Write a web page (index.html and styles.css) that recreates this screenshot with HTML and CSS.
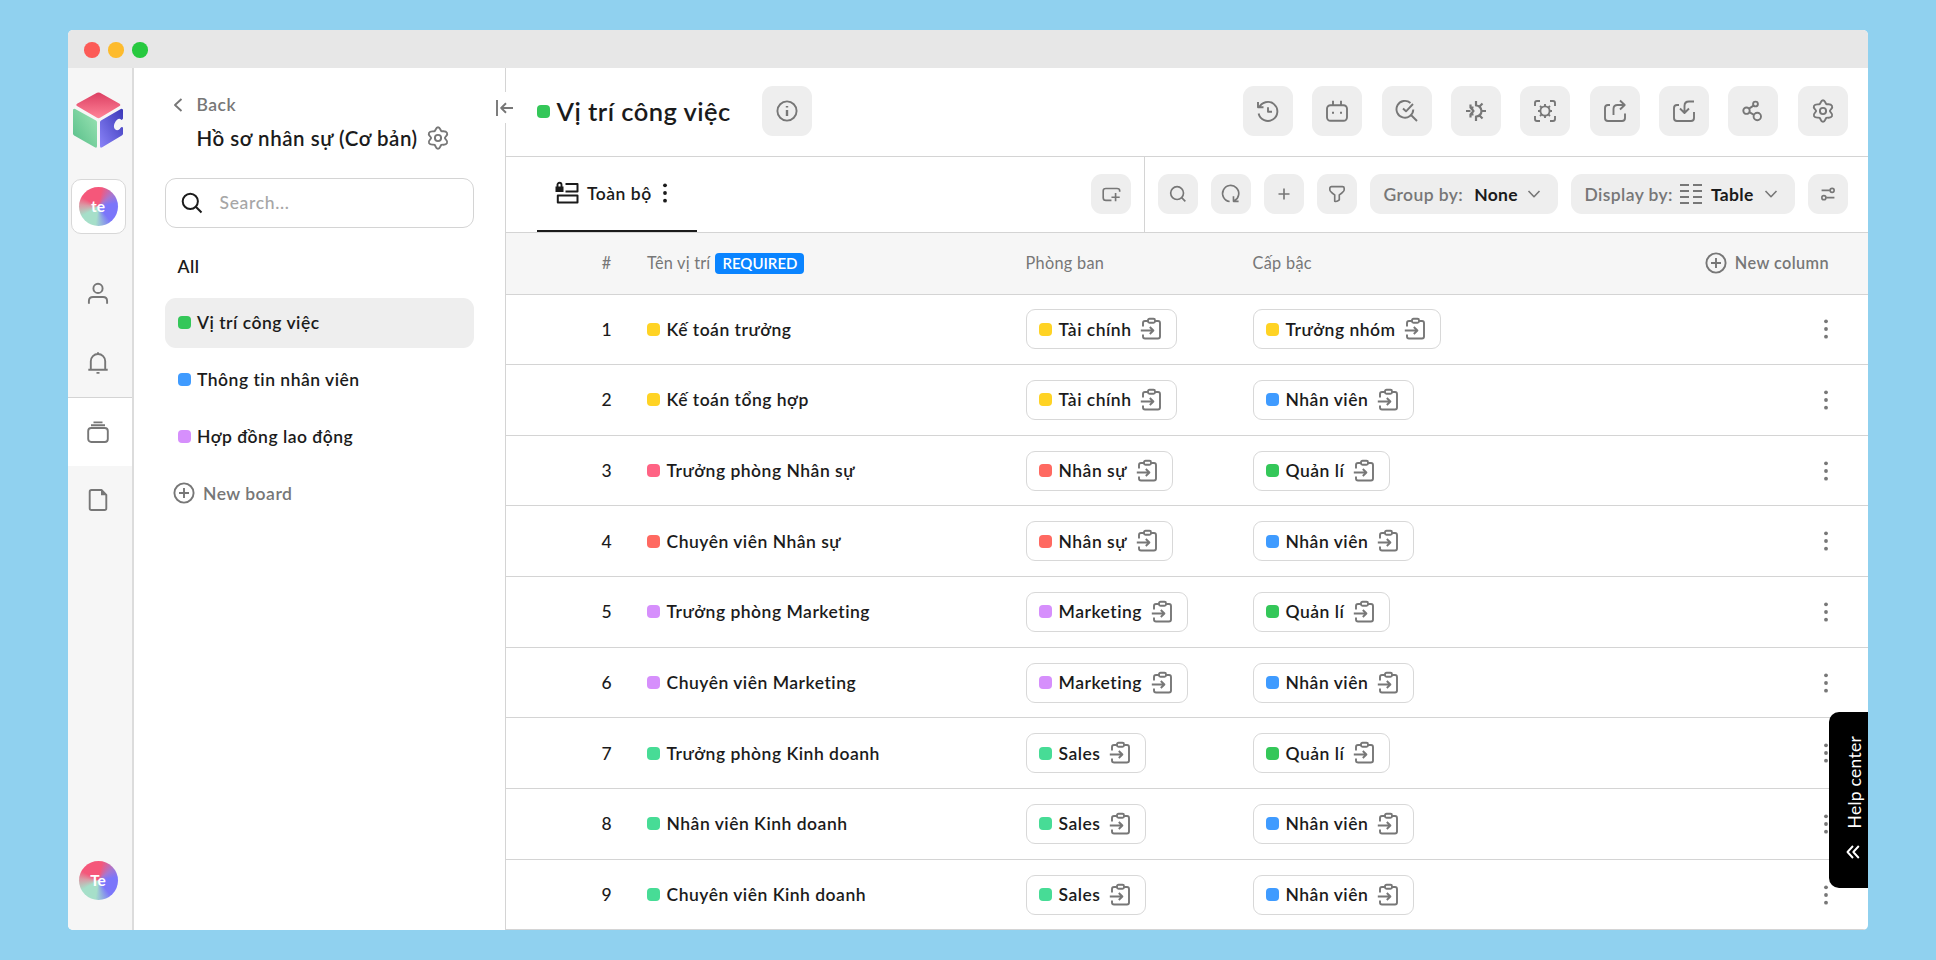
FILE: index.html
```html
<!DOCTYPE html>
<html lang="vi">
<head>
  <meta charset="UTF-8">
  <meta name="viewport" content="width=device-width, initial-scale=1.0">
  <title>Vị trí công việc</title>
  <link rel="stylesheet" href="styles.css">
</head>
<body>

<!-- Icon sprite -->
<svg class="sprite" xmlns="http://www.w3.org/2000/svg">
  <symbol id="i-gear" viewBox="0 0 24 24"><path d="M12 1.2C14.4 1.2 14.1 4.4 15.4 5.1S19.6 4.3 21 6.9 18.9 10.5 18.9 12 22.4 14.4 21 17.1 16.8 18.1 15.4 18.9 14.4 22.8 12 22.8 9.9 19.7 8.6 18.9 4.4 19.7 3 17.1 5.1 13.5 5.1 12 1.6 9.5 3 6.9 7.2 5.9 8.6 5.1 9.6 1.2 12 1.2Z"/><circle cx="12" cy="12" r="3.1"/></symbol>
  <symbol id="i-search" viewBox="0 0 24 24"><circle cx="10.3" cy="10.3" r="7.6"/><path d="M15.8 15.8 21.5 21.5"/></symbol>
  <symbol id="i-plus-circle" viewBox="0 0 24 24"><circle cx="12" cy="12" r="9.6"/><path d="M12 7v10M7 12h10"/></symbol>
  <symbol id="i-chev" viewBox="0 0 14 8"><path d="M1.5 1 7 6.7 12.5 1"/></symbol>
  <symbol id="i-dots" viewBox="0 0 6 22"><circle cx="3" cy="3.3" r="1.9"/><circle cx="3" cy="11" r="1.9"/><circle cx="3" cy="18.7" r="1.9"/></symbol>
  <symbol id="i-link" viewBox="0 0 24 24"><path d="M9 4H6Q4 4 4 6V9.5M16 4h3Q21 4 21 6V19.5Q21 21.5 19 21.5H6Q4 21.5 4 19.5V17.5M1.8 13.5H14M10.8 10 14.4 13.5 10.8 17"/><rect x="9" y="1.8" width="7" height="4" rx="1.5"/></symbol>
</svg>

<div class="window">
  <div class="titlebar">
    <span class="light light-red"></span>
    <span class="light light-yellow"></span>
    <span class="light light-green"></span>
  </div>

  <div class="app">
    <nav class="rail">
      <svg class="logo" viewBox="0 0 50 56">
        <defs>
          <linearGradient id="lg-top" x1="0" y1="0" x2="0" y2="1"><stop offset="0" stop-color="#dc3f62"/><stop offset="1" stop-color="#ff8398"/></linearGradient>
          <linearGradient id="lg-left" x1="0" y1="1" x2="1" y2="0"><stop offset="0" stop-color="#55bd88"/><stop offset="1" stop-color="#9de5b5"/></linearGradient>
          <linearGradient id="lg-right" x1="0" y1="1" x2="1" y2="0"><stop offset="0" stop-color="#8a84f8"/><stop offset="1" stop-color="#3b38b8"/></linearGradient>
        </defs>
        <path fill="url(#lg-top)" d="M24 .8Q25.500 0 27 .8L46.600 11.800Q48.300 13 46.600 14L27 25.800Q25.500 26.600 24 25.800L4 14Q2.300 13 4 11.800Z"/>
        <path fill="url(#lg-left)" d="M0 18.300Q0 16 2.200 17L23 28.500Q24 29.200 24 30.500V54Q24 56.500 21.800 55.300L1.200 43.500Q0 42.800 0 41.500Z"/>
        <path fill="url(#lg-right)" d="M50 18.300Q50 16 47.800 17L28 28.500Q27 29.200 27 30.500V54Q27 56.500 29.200 55.300L48.800 43.500Q50 42.800 50 41.500V35.600C48.500 34.200 47.500 35.800 46.800 37C43 40.200 39.500 36.500 41.500 31.500C43.300 27.500 46.300 25.500 48 27.600Q49 28.500 50 26.500Z"/>
      </svg>
      <div class="workspace"><span class="avatar">te</span></div>
      <div class="rail-item"><svg class="icon" viewBox="0 0 24 24"><circle cx="12" cy="6.4" r="4.6"/><path d="M2.900 21.800V19Q2.900 15 7 15H17Q21.100 15 21.100 19V21.800"/></svg></div>
      <div class="rail-item"><svg class="icon" viewBox="0 0 24 24"><path d="M12 1.300V3M4.800 18.600V10.200A7.200 7.200 0 0 1 19.200 10.200V18.600M2.300 18.800H21.700M10.500 21.900H13.500"/></svg></div>
      <div class="rail-item rail-active"><svg class="icon" viewBox="0 0 24 24"><rect x="2.2" y="8" width="19.6" height="14" rx="3"/><path d="M7.500 2.400H16.500M5 5.200H19"/></svg></div>
      <div class="rail-item"><svg class="icon" viewBox="0 0 24 24"><path d="M15.500 2H5.500Q3.700 2 3.700 3.800V20.200Q3.700 22 5.500 22H18.500Q20.300 22 20.300 20.200V6.800Z"/><path class="solid" d="M15 2V7.300H20.300Z"/></svg></div>
      <span class="avatar avatar-user">Te</span>
    </nav>

    <aside class="sidebar">
      <button class="collapse"><svg viewBox="0 0 18 16"><path d="M1 0V16M17 8H5.500M10 3.300 5.200 8 10 12.700"/></svg></button>
      <a class="back"><svg viewBox="0 0 10 14"><path d="M8.500 1 2 7 8.500 13"/></svg>Back</a>
      <div class="board-title">Hồ sơ nhân sự (Cơ bản)<svg class="icon"><use href="#i-gear"/></svg></div>
      <div class="search"><svg class="icon"><use href="#i-search"/></svg>Search...</div>
      <ul class="boards">
        <li class="board">All</li>
        <li class="board board-active"><i class="dot green"></i>Vị trí công việc</li>
        <li class="board"><i class="dot blue"></i>Thông tin nhân viên</li>
        <li class="board"><i class="dot purple"></i>Hợp đồng lao động</li>
        <li class="board board-new"><svg class="icon"><use href="#i-plus-circle"/></svg>New board</li>
      </ul>
    </aside>

    <main class="main">
      <header class="header">
        <i class="dot green"></i>
        <h1>Vị trí công việc</h1>
        <button class="btn btn-info"><svg class="icon" viewBox="0 0 24 24"><circle cx="12" cy="12" r="9.6"/><path d="M12 11V17M12 7V8.500" stroke-width="2.400"/></svg></button>
        <div class="actions">
          <button class="btn"><svg class="icon" viewBox="0 0 24 24"><path d="M3 9A9.500 9.500 0 1 1 2.600 14.500M2 3V8.200H7.500M12 8.200V12.800H16"/></svg></button>
          <button class="btn"><svg class="icon" viewBox="0 0 24 24"><rect x="2" y="6.2" width="20" height="15.6" rx="3.5"/><path d="M8 1.700V6M16 1.700V6"/><path d="M8 12.800V14.800M16 12.800V14.800" stroke-width="2"/></svg></button>
          <button class="btn"><svg class="icon" viewBox="0 0 24 24"><path d="M15.500 4A8.400 8.400 0 1 0 18.300 10.500M8 9.500 11 12.300 18 5M16 16 22 22"/></svg></button>
          <button class="btn"><svg class="icon" viewBox="0 0 24 24"><path d="M12 2V6.500A5.500 5.500 0 0 1 12 17.500V22M15.500 7.500 18.500 4.500M17.500 12H22M15.500 16.500 18.500 19.500M2 12H6.500M9.500 8.500 6 8.500M9.500 15.500H6M6.500 5.500V8.500L9.500 12 6.500 15.500V18.500" stroke-width="2.200"/></svg></button>
          <button class="btn"><svg class="icon" viewBox="0 0 24 24"><path d="M2 7V4Q2 2 4 2H7M17 2H20Q22 2 22 4V7M22 17V20Q22 22 20 22H17M7 22H4Q2 22 2 20V17"/><circle cx="12" cy="12" r="4.6"/><path d="M12 5V7.400M12 16.600V19M5 12H7.400M16.600 12H19M7 7 8.700 8.700M15.300 15.300 17 17M7 17 8.700 15.300M15.300 8.700 17 7"/></svg></button>
          <button class="btn"><svg class="icon" viewBox="0 0 24 24"><path d="M7 6H5Q2 6 2 9V19Q2 22 5 22H19Q22 22 22 19V14.500M10.500 16V10Q10.500 6 14.500 6H21M17 1.500 21.700 6 17 10.500"/></svg></button>
          <button class="btn"><svg class="icon" viewBox="0 0 24 24"><path d="M7 6H5Q2 6 2 9V19Q2 22 5 22H19Q22 22 22 19V13M22 2.500H17Q12.500 2.500 12.500 7V13.500M8 9.500 12.500 14 17 9.500"/></svg></button>
          <button class="btn"><svg class="icon" viewBox="0 0 24 24"><circle cx="5.5" cy="11.7" r="3.2"/><circle cx="14.5" cy="5" r="2.4"/><circle cx="16.3" cy="17.5" r="3.7"/><path d="M8 9.600 12.500 6.600M8.300 13.200 13 15.800"/></svg></button>
          <button class="btn"><svg class="icon"><use href="#i-gear"/></svg></button>
        </div>
      </header>

      <div class="tabs">
        <div class="tab">
          <svg class="icon" viewBox="0 0 24 24"><path d="M10.500 3H22.500V10.500H10.500M2.800 14.500H22.500V21.500H2.800Z" stroke-width="2"/><path class="solid" d="M.5 5.500H8.500V11H.5Z"/><path d="M2.500 6V3.800A2 2 0 0 1 6.500 3.800V6"/></svg>
          Toàn bộ
          <svg class="dots"><use href="#i-dots"/></svg>
        </div>
        <button class="btn btn-sm btn-view"><svg class="icon" viewBox="0 0 24 24"><path d="M12.500 19H6.500Q3.500 19 3.500 16V8.500Q3.500 6 6.500 6H18.500Q21.500 6 21.500 8.500V9.500M17 11V20M12.500 15.500H21.500"/></svg></button>
        <div class="tools">
          <button class="btn btn-sm"><svg class="icon" viewBox="0 0 24 24"><circle cx="11" cy="11" r="7"/><path d="M16 16 20 20"/></svg></button>
          <button class="btn btn-sm"><svg class="icon" viewBox="0 0 24 24"><path d="M10.500 20.200A8.800 8.800 0 1 1 15.500 19.400M20.300 20H14.700V14.400"/></svg></button>
          <button class="btn btn-sm"><svg class="icon" viewBox="0 0 24 24"><path d="M12 6V18M6 12H18"/></svg></button>
          <button class="btn btn-sm"><svg class="icon" viewBox="0 0 24 24"><path d="M6 4H18Q19.800 4 19.800 5.500V7.500Q19.800 9 14.500 13V18.500Q12 20.800 9.500 20V13Q4.200 9 4.200 7.500V5.500Q4.200 4 6 4Z"/></svg></button>
          <button class="select select-group">Group by: <b>None</b><svg class="chev"><use href="#i-chev"/></svg></button>
          <button class="select">Display by:<svg class="lines" viewBox="0 0 22 20"><path d="M0 1H9M0 7H9M0 13H9M0 19H9M13 1H22M13 7H22M13 13H22M13 19H22"/></svg><b>Table</b><svg class="chev"><use href="#i-chev"/></svg></button>
          <button class="btn btn-sm"><svg class="icon" viewBox="0 0 24 24"><path d="M5 8H14M10 16H19"/><circle cx="16.5" cy="8" r="2.2"/><circle cx="7.5" cy="16" r="2.2"/></svg></button>
        </div>
      </div>

      <div class="table">
        <div class="row head">
          <span class="num">#</span>
          <span class="name">Tên vị trí<em class="badge">REQUIRED</em></span>
          <span>Phòng ban</span>
          <span>Cấp bậc</span>
          <span class="new-column"><svg class="icon"><use href="#i-plus-circle"/></svg>New column</span>
        </div>
        <div id="rows"></div>
      </div>
    </main>
  </div>

  <button class="help"><span>Help center</span><svg viewBox="0 0 14 14"><path d="M7 1 1.500 7 7 13M12.800 1 7.300 7 12.800 13"/></svg></button>
</div>

<script>
  const departments = {
    "Tài chính": "yellow",
    "Nhân sự": "red",
    "Marketing": "purple",
    "Sales": "mint"
  };
  const levels = {
    "Trưởng nhóm": "yellow",
    "Nhân viên": "blue",
    "Quản lí": "green"
  };

  // name, dot color, department, level
  const positions = [
    ["Kế toán trưởng", "yellow", "Tài chính", "Trưởng nhóm"],
    ["Kế toán tổng hợp", "yellow", "Tài chính", "Nhân viên"],
    ["Trưởng phòng Nhân sự", "pink", "Nhân sự", "Quản lí"],
    ["Chuyên viên Nhân sự", "red", "Nhân sự", "Nhân viên"],
    ["Trưởng phòng Marketing", "purple", "Marketing", "Quản lí"],
    ["Chuyên viên Marketing", "purple", "Marketing", "Nhân viên"],
    ["Trưởng phòng Kinh doanh", "mint", "Sales", "Quản lí"],
    ["Nhân viên Kinh doanh", "mint", "Sales", "Nhân viên"],
    ["Chuyên viên Kinh doanh", "mint", "Sales", "Nhân viên"]
  ];

  function chip(label, color) {
    return `<span class="cell"><span class="chip"><i class="dot ${color}"></i>${label}<svg class="icon"><use href="#i-link"/></svg></span></span>`;
  }

  document.getElementById("rows").innerHTML = positions.map(([name, color, dep, level], i) => `
    <div class="row">
      <span class="num">${i + 1}</span>
      <span class="name"><i class="dot ${color}"></i>${name}</span>
      ${chip(dep, departments[dep])}
      ${chip(level, levels[level])}
      <svg class="dots"><use href="#i-dots"/></svg>
    </div>`).join("");
</script>

</body>
</html>
```
FILE: styles.css
```css
* {
  box-sizing: border-box;
}

body {
  height: 960px;
  margin: 0;
  padding: 30px 68px;
  overflow: hidden;
  background: #90d1ef;
  color: #1b1b1b;
  font-family: Lato, "Noto Sans", sans-serif;
  font-size: 17.5px;
  font-weight: 600;
  letter-spacing: 0.5px;
  line-height: 1.2;
}

button {
  padding: 0;
  border: none;
  color: inherit;
  font: inherit;
  letter-spacing: inherit;
}

svg {
  flex: none;
  fill: none;
  stroke: currentColor;
  stroke-width: 1.9;
  stroke-linejoin: round;
}

.sprite {
  position: absolute;
  width: 0;
  height: 0;
}

.icon {
  width: 24px;
  height: 24px;
  color: #777;
}

.solid {
  fill: currentColor;
  stroke: none;
}

.window {
  position: relative;
  display: flex;
  flex-direction: column;
  height: 900px;
  border-radius: 5px;
  background: #fff;
  overflow: hidden;
}

.titlebar {
  display: flex;
  align-items: center;
  gap: 8.5px;
  height: 38px;
  padding: 2px 0 0 16px;
  background: #e7e7e7;
}

.light {
  width: 15.5px;
  height: 15.5px;
  border-radius: 50%;
}

.light-red { background: #fc5b57; }
.light-yellow { background: #fdbb2d; }
.light-green { background: #27c93f; }

.app {
  display: flex;
  flex: 1;
  min-height: 0;
}

/* Left rail */
.rail {
  display: flex;
  flex-direction: column;
  align-items: center;
  width: 66px;
  padding: 24px 0 30px;
  border-right: 2px solid #dcdcdc;
  background: #f6f6f6;
}

.logo {
  width: 50px;
  height: 56px;
  margin-right: 4px;
  stroke: none;
}

.workspace {
  display: flex;
  align-items: center;
  justify-content: center;
  width: 55px;
  height: 55px;
  margin: 31px 4px 26px 0;
  border: 1px solid #d8d8d8;
  border-radius: 10px;
  background: #fff;
}

.avatar {
  display: flex;
  align-items: center;
  justify-content: center;
  width: 39px;
  height: 39px;
  border-radius: 50%;
  background: conic-gradient(from -60deg, #f5577a 0deg 70deg, #a777d0 110deg, #7b76fa 140deg 200deg, #a6dfc9 250deg 300deg, #d99aa5 335deg, #f5577a 360deg);
  color: #fff;
  font-size: 15.5px;
  font-weight: 700;
  letter-spacing: 0;
}

.avatar-user {
  margin: auto 4px 0 0;
}

.rail-item {
  display: flex;
  align-items: center;
  justify-content: center;
  width: 100%;
  height: 68.5px;
  padding-right: 4px;
}

.rail-active {
  border-top: 1px solid #d4d4d4;
  background: #fff;
}

/* Sidebar */
.sidebar {
  position: relative;
  width: 372px;
  padding: 26px 31px;
  border-right: 1px solid #d4d4d4;
}

.collapse {
  position: absolute;
  top: 24px;
  right: -11px;
  display: flex;
  align-items: center;
  width: 20px;
  height: 31px;
  background: #fff;
  color: #777;
}

.collapse svg {
  width: 18px;
  height: 16px;
}

.back {
  display: flex;
  align-items: center;
  gap: 14px;
  padding-left: 7.5px;
  color: #777;
}

.back svg {
  width: 10px;
  height: 14px;
}

.board-title {
  display: flex;
  align-items: center;
  gap: 8px;
  margin: 11px 0 27px 31.5px;
  font-size: 20.5px;
  letter-spacing: 0.54px;
}

.search {
  display: flex;
  align-items: center;
  gap: 15.5px;
  height: 50px;
  padding-left: 14px;
  border: 1px solid #d4d4d4;
  border-radius: 11px;
  color: #a6a6a6;
  font-weight: 500;
  letter-spacing: 0.65px;
}

.search .icon {
  color: #1b1b1b;
  stroke-width: 2;
}

.boards {
  display: flex;
  flex-direction: column;
  gap: 6.75px;
  margin: 13.5px 0 0;
  padding: 0;
  list-style: none;
}

.board {
  display: flex;
  align-items: center;
  gap: 6.5px;
  height: 50px;
  padding-left: 12.5px;
  border-radius: 11px;
}

.board-active {
  background: #eee;
}

.board-new {
  gap: 7px;
  padding-left: 7px;
  color: #777;
}

.dot {
  flex: none;
  width: 13px;
  height: 13px;
  border-radius: 4px;
}

.green { background: #34c759; }
.blue { background: #3f9bff; }
.purple { background: #d68ffc; }
.yellow { background: #ffd324; }
.red { background: #ff6961; }
.pink { background: #ff6384; }
.mint { background: #47dc96; }

/* Main */
.main {
  flex: 1;
  min-width: 0;
}

.header {
  display: flex;
  align-items: center;
  height: 88.5px;
  padding: 0 20.5px 1px 31px;
  border-bottom: 1px solid #d4d4d4;
}

h1 {
  margin: 0 0 0 6.5px;
  font-size: 25.5px;
  font-weight: 600;
  letter-spacing: 0.45px;
}

.btn {
  display: flex;
  align-items: center;
  justify-content: center;
  width: 50px;
  height: 50px;
  border-radius: 11px;
  background: #eee;
}

.btn-info {
  margin-left: 31.5px;
}

.actions {
  display: flex;
  gap: 19.3px;
  margin-left: auto;
}

.tabs {
  display: flex;
  align-items: center;
  height: 76.5px;
  padding: 0 20.5px 0 31px;
  border-bottom: 1px solid #d4d4d4;
}

.tab {
  display: flex;
  align-items: center;
  gap: 8px;
  align-self: stretch;
  width: 160px;
  padding-left: 18px;
  border-bottom: 2px solid #1b1b1b;
}

.tab .icon {
  color: #1b1b1b;
}

.dots {
  width: 6px;
  height: 22px;
  fill: currentColor;
  stroke: none;
}

.tab .dots {
  margin-left: 2.5px;
}

.btn-sm {
  width: 40px;
  height: 40px;
}

.btn-sm .icon {
  width: 22px;
  height: 22px;
  stroke-width: 1.8;
}

.btn-view {
  margin: 0 13px 0 auto;
}

.tools {
  display: flex;
  align-items: center;
  gap: 13px;
  align-self: stretch;
  padding-left: 13px;
  border-left: 1px solid #d4d4d4;
}

.select {
  display: flex;
  align-items: center;
  width: 224px;
  height: 40px;
  padding: 0 17px 0 14px;
  border-radius: 11px;
  background: #eee;
  color: #777;
  letter-spacing: 0.4px;
}

.select b {
  color: #1b1b1b;
  font-weight: 700;
  letter-spacing: 0.3px;
}

.select-group {
  width: 188px;
}

.select-group b {
  margin-left: 11px;
}

.lines {
  width: 22px;
  height: 20px;
  margin: 0 9px 0 7px;
}

.chev {
  width: 14px;
  height: 8px;
  margin-left: auto;
  stroke-width: 1.6;
}

/* Table */
.row {
  display: grid;
  grid-template-columns: 141px 378.5px 227px 1fr auto;
  align-items: center;
  height: 70.67px;
  padding-right: 39px;
  border-bottom: 1px solid #d4d4d4;
}

.head {
  height: 61.5px;
  background: #f6f6f6;
  color: #777;
  font-size: 16.3px;
  font-weight: 400;
  letter-spacing: 0.3px;
}

.num {
  padding-left: 60px;
  text-align: center;
  letter-spacing: 0;
}

.row:not(.head) .num {
  font-weight: 500;
}

.name {
  display: flex;
  align-items: center;
  gap: 6.5px;
}

.head .name {
  gap: 5px;
  letter-spacing: 0.2px;
}

.badge {
  height: 20.5px;
  padding: 0 7px;
  border-radius: 4px;
  background: #0a84ff;
  color: #fff;
  font-size: 15px;
  font-style: normal;
  font-weight: 600;
  letter-spacing: 0;
  line-height: 20px;
}

.new-column {
  display: flex;
  align-items: center;
  gap: 6.5px;
  font-size: 16.3px;
  font-weight: 600;
  letter-spacing: 0.4px;
}

.row .dots {
  color: #777;
}

.cell {
  display: flex;
}

.chip {
  display: flex;
  align-items: center;
  gap: 6.5px;
  height: 40px;
  padding: 0 13px 0 12.5px;
  border: 1px solid #d8d8d8;
  border-radius: 9px;
}

.chip .icon {
  margin-left: 1px;
}

/* Help tab on the window edge */
.help {
  position: absolute;
  right: 0;
  bottom: 42.5px;
  display: flex;
  flex-direction: column;
  align-items: center;
  gap: 17.5px;
  width: 39px;
  height: 176px;
  padding: 24px 0 0 11px;
  border-radius: 10px 0 0 10px;
  background: #000;
  color: #fff;
  font-size: 17.5px;
  font-weight: 400;
  letter-spacing: 0.25px;
}

.help span {
  writing-mode: vertical-rl;
  transform: rotate(180deg);
}

.help svg {
  width: 14px;
  height: 14px;
  margin-right: 3px;
}
```
